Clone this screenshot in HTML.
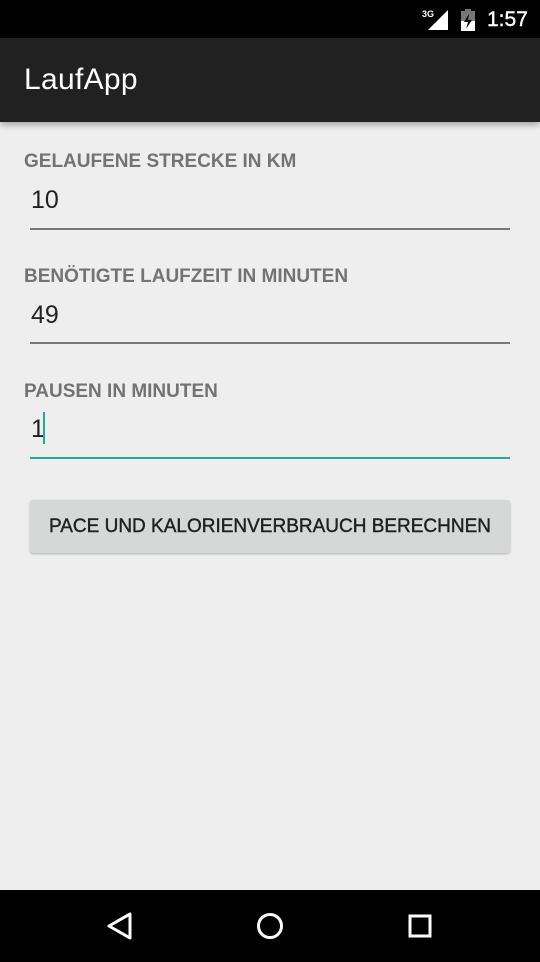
<!DOCTYPE html>
<html><head><meta charset="utf-8"><style>
body{margin:0;width:540px;height:962px;background:#eeeeee;font-family:"Liberation Sans",sans-serif;position:relative;overflow:hidden}
.sb{position:absolute;top:0;left:0;width:540px;height:38px;background:#000}
.ab{position:absolute;top:38px;left:0;width:540px;height:84px;background:#212121;box-shadow:0 3px 6px rgba(0,0,0,.3)}
.ab span{position:absolute;left:24px;top:25px;color:#fff;font-size:30px;letter-spacing:0.3px}
.lbl{position:absolute;left:24px;font-size:19px;font-weight:bold;color:#737373}
.val{position:absolute;left:31px;font-size:25px;color:#212121}
.ln{position:absolute;left:30px;width:480px;height:2px;background:#777}
.btn{position:absolute;left:30px;top:500px;width:480px;height:53px;background:#d6d7d7;border-radius:3px;box-shadow:0 1px 2px rgba(0,0,0,.25);font-size:19px;color:#212121;text-align:center;line-height:53px;-webkit-text-stroke:0.4px #212121}
.nb{position:absolute;top:890px;left:0;width:540px;height:72px;background:#000}
</style></head><body>
<div class="sb">
<svg style="position:absolute;left:420px;top:8px" width="30" height="24"><text x="2" y="9" fill="#fff" font-size="9" font-weight="bold" font-family="Liberation Sans">3G</text><polygon points="8,22 28,22 28,2" fill="#fff"/></svg>
<svg style="position:absolute;left:460px;top:8px" width="16" height="24"><rect x="1" y="3" width="14" height="20" fill="#777"/><rect x="5" y="1" width="6" height="2" fill="#777"/><rect x="1" y="13" width="14" height="10" fill="#fff"/><polygon points="9,6 4,14 8,14 6,21 12,12 8,12" fill="#000"/></svg>
<span style="position:absolute;left:487px;top:8px;color:#fff;font-size:21px;-webkit-text-stroke:0.4px #fff">1:57</span>
</div>
<div class="ab"><span>LaufApp</span></div>
<div class="lbl" style="top:151px">GELAUFENE STRECKE IN KM</div>
<div class="val" style="top:186px">10</div>
<div class="ln" style="top:228px"></div>
<div class="lbl" style="top:266px">BENÖTIGTE LAUFZEIT IN MINUTEN</div>
<div class="val" style="top:301px">49</div>
<div class="ln" style="top:342px"></div>
<div class="lbl" style="top:381px">PAUSEN IN MINUTEN</div>
<div class="val" style="top:415px">1</div>
<div style="position:absolute;left:43px;top:412px;width:2px;height:32px;background:#26a69a"></div>
<div class="ln" style="top:457px;background:#26a69a"></div>
<div class="btn">PACE UND KALORIENVERBRAUCH BERECHNEN</div>
<div class="nb">
<svg style="position:absolute;left:105px;top:21px" width="30" height="30"><polygon points="25,3 25,27 4,15" fill="none" stroke="#fff" stroke-width="3" stroke-linejoin="round"/></svg>
<svg style="position:absolute;left:255px;top:21px" width="30" height="30"><circle cx="15" cy="15" r="11.5" fill="none" stroke="#fff" stroke-width="3"/></svg>
<svg style="position:absolute;left:405px;top:21px" width="30" height="30"><rect x="5" y="5" width="20" height="20" fill="none" stroke="#fff" stroke-width="3"/></svg>
</div>
</body></html>
